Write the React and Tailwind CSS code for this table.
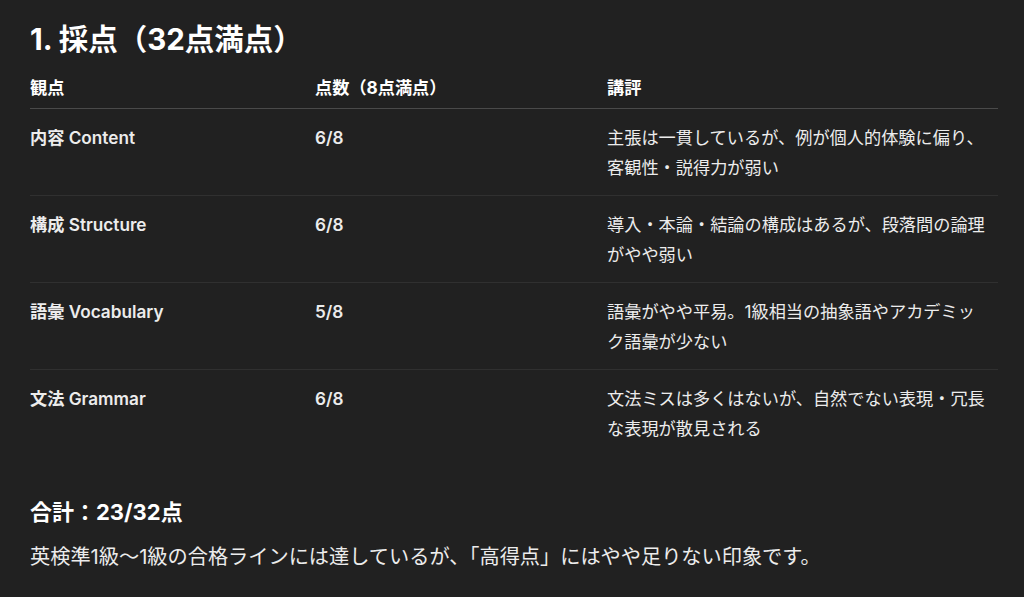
import React from "react";

const rows = [
  ["内容 Content", "6/8", ["主張は一貫しているが、例が個人的体験に偏り、", "客観性・説得力が弱い"]],
  ["構成 Structure", "6/8", ["導入・本論・結論の構成はあるが、段落間の論理", "がやや弱い"]],
  ["語彙 Vocabulary", "5/8", ["語彙がやや平易。1級相当の抽象語やアカデミッ", "ク語彙が少ない"]],
  ["文法 Grammar", "6/8", ["文法ミスは多くはないが、自然でない表現・冗長", "な表現が散見される"]],
];

export default function App() {
  return (
    <div
      className="min-h-[597px] w-full bg-[#212121] text-[#ececec] pl-[30px] pr-[26px] pt-[21px]"
      style={{ fontFamily: 'Inter, "Noto Sans CJK JP", sans-serif' }}
    >
      <h3 className="text-[29.5px] leading-[37px] font-bold text-white">1. 採点（32点満点）</h3>
      <table className="mt-[15px] w-full table-fixed border-collapse text-[17.2px] leading-[30px]">
        <colgroup>
          <col className="w-[285px]" />
          <col className="w-[292px]" />
          <col />
        </colgroup>
        <thead>
          <tr className="border-b border-[#4a4a4a]">
            <th className="text-left font-bold text-white pb-[5px] pt-0">観点</th>
            <th className="text-left font-bold text-white pb-[5px] pt-0">点数（8点満点）</th>
            <th className="text-left font-bold text-white pb-[5px] pt-0">講評</th>
          </tr>
        </thead>
        <tbody>
          {rows.map((r, i) => (
            <tr key={i} className={i < rows.length - 1 ? "border-b border-[#303030]" : ""}>
              <td className="align-top pt-[14px] pb-[12px] font-semibold">{r[0]}</td>
              <td className="align-top pt-[14px] pb-[12px] font-semibold">{r[1]}</td>
              <td className="align-top pt-[14px] pb-[12px] whitespace-nowrap">
                {r[2][0]}
                <br />
                {r[2][1]}
              </td>
            </tr>
          ))}
        </tbody>
      </table>
      <h4 className="mt-[42px] text-[22px] leading-[28px] font-bold text-white">合計：23/32点</h4>
      <p className="mt-[16px] text-[20.2px] leading-[30px]">
        英検準1級～1級の合格ラインには達しているが、「高得点」にはやや足りない印象です。
      </p>
    </div>
  );
}
